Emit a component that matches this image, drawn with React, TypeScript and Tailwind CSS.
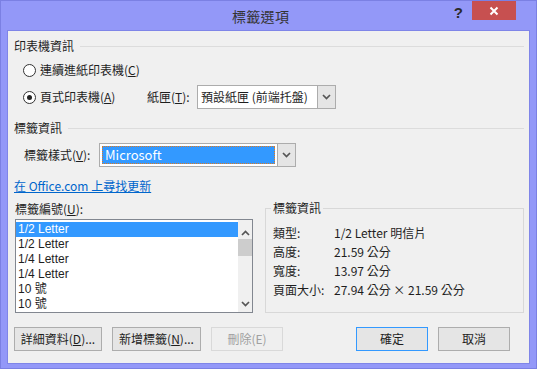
import React from "react";

const Chevron = ({ up = false }: { up?: boolean }) => (
  <svg width="9" height="6" viewBox="0 0 9 6" className={up ? "rotate-180" : ""}>
    <polyline points="1,1 4.5,4.5 8,1" fill="none" stroke="#555" strokeWidth="1.7" />
  </svg>
);

const Radio = ({ checked }: { checked?: boolean }) => (
  <span className="w-[13px] h-[13px] rounded-full border border-[#333] bg-white flex items-center justify-center shrink-0">
    {checked && <span className="w-[5px] h-[5px] rounded-full bg-[#222]" />}
  </span>
);

const SectionHeader = ({ title, className }: { title: string; className: string }) => (
  <div className={"flex items-center h-[16px] leading-[16px] " + className}>
    <span>{title}</span>
    <span className="flex-1 h-px bg-[#dcdcdc] ml-[6px]" />
  </div>
);

const DropButton = () => (
  <div className="w-[18px] h-full bg-[#e5e5e5] border-l border-[#acacac] flex items-center justify-center">
    <Chevron />
  </div>
);

const labels = ["1/2 Letter", "1/2 Letter", "1/4 Letter", "1/4 Letter", "10 號", "10 號"];

const info: [string, string][] = [
  ["類型:", "1/2 Letter 明信片"],
  ["高度:", "21.59 公分"],
  ["寬度:", "13.97 公分"],
  ["頁面大小:", "27.94 公分 × 21.59 公分"],
];

function Btn({ children, w, variant }: { children: React.ReactNode; w: string; variant?: "default" | "disabled" }) {
  const base = "h-[24px] flex items-center justify-center border " + w + " ";
  const look =
    variant === "default"
      ? "border-[#3399ff] bg-[#e5e5e5]"
      : variant === "disabled"
      ? "border-[#d9d9d9] bg-[#efefef] text-[#a0a0a0]"
      : "border-[#adadad] bg-[#e5e5e5]";
  return <div className={base + look}>{children}</div>;
}

export default function App() {
  return (
    <div className="w-[537px] h-[369px] bg-[#9398f8] border border-[#7b80e3] flex flex-col text-[12px] text-[#1e1e1e] font-['Noto_Sans_CJK_TC',sans-serif] select-none">
      {/* title bar */}
      <div className="h-[29px] flex shrink-0">
        <span className="ml-[231px] mt-[6px] text-[14px] tracking-[0.3px] text-[#333] leading-[18px]">標籤選項</span>
        <span className="flex-1" />
        <span className="mt-[3px] mr-[9px] text-[15px] font-bold text-[#2a2a2a] font-['Liberation_Sans',sans-serif] leading-[18px]">?</span>
        <div className="w-[44px] h-[19px] bg-[#c75050] flex items-center justify-center mr-[20px]">
          <svg width="10" height="10" viewBox="0 0 10 10">
            <path d="M1.5 1.5 L8.5 8.5 M8.5 1.5 L1.5 8.5" stroke="#fff" strokeWidth="2" />
          </svg>
        </div>
      </div>

      {/* client */}
      <div className="flex-1 mx-[6px] mb-[4px] border border-[#7f85e8] bg-[#f0f0f0] pl-[6px] pr-[5px] flex flex-col">
        <SectionHeader title="印表機資訊" className="mt-[7px]" />

        <div className="mt-[6px] h-[20px] flex items-center pl-[9px] gap-[4px]">
          <Radio />
          <span>
            連續進紙印表機(<u>C</u>)
          </span>
        </div>

        <div className="mt-[5px] h-[24px] flex items-center pl-[9px]">
          <Radio checked />
          <span className="ml-[4px] w-[107px]">
            頁式印表機(<u>A</u>)
          </span>
          <span className="w-[50px]">
            紙匣(<u>T</u>):
          </span>
          <div className="w-[139px] h-[24px] border border-[#acacac] bg-white flex">
            <span className="flex-1 pl-[3px] leading-[22px]">預設紙匣 (前端托盤)</span>
            <DropButton />
          </div>
        </div>

        <SectionHeader title="標籤資訊" className="mt-[11px]" />

        <div className="mt-[7px] h-[24px] flex items-center pl-[10px]">
          <span className="w-[75px]">
            標籤樣式(<u>V</u>):
          </span>
          <div className="w-[197px] h-[24px] border border-[#acacac] bg-white flex">
            <div className="flex-1 p-[2px]">
              <div className="h-full bg-[#3399ff] border border-dotted border-[#e07a1f] text-white pl-[2px] leading-[16px] text-[13px]">
                Microsoft
              </div>
            </div>
            <DropButton />
          </div>
        </div>

        <div className="mt-[11px] h-[16px] leading-[16px] text-[#0066cc] underline">在 Office.com 上尋找更新</div>

        <div className="mt-[7px] flex">
          <div className="ml-[1px] w-[238px] flex flex-col">
            <span className="h-[16px] leading-[16px]">
              標籤編號(<u>U</u>):
            </span>
            <div className="mt-[2px] h-[94px] border border-[#828790] bg-white flex">
              <div className="flex-1 flex flex-col pt-[2px] font-['Liberation_Sans','Noto_Sans_CJK_TC',sans-serif]">
                {labels.map((l, i) => (
                  <div
                    key={i}
                    className={
                      "h-[15px] leading-[15px] pl-[2px] overflow-hidden " + (i === 0 ? "bg-[#3399ff] text-white" : "")
                    }
                  >
                    {l}
                  </div>
                ))}
              </div>
              <div className="w-[14px] bg-[#f0f0f0] flex flex-col">
                <div className="h-[18px] flex items-end justify-center pb-[2px]">
                  <Chevron up />
                </div>
                <div className="mt-[1px] h-[17px] bg-[#cdcdcd]" />
                <div className="flex-1" />
                <div className="h-[17px] flex items-center justify-center">
                  <Chevron />
                </div>
              </div>
            </div>
          </div>

          <div className="ml-[12px] flex-1 mt-[7px] h-[105px] border border-[#d8d8d8] relative pt-[14px] pl-[7px]">
            <span className="absolute -top-[9px] left-[5px] px-[2px] bg-[#f0f0f0] leading-[16px]">標籤資訊</span>
            {info.map(([k, v]) => (
              <div key={k} className="flex h-[19px] leading-[19px]">
                <span className="w-[61px]">{k}</span>
                <span>{v}</span>
              </div>
            ))}
          </div>
        </div>

        <div className="mt-[14px] flex pr-[14px]">
          <Btn w="w-[88px]">
            詳細資料(<u>D</u>)...
          </Btn>
          <span className="w-[10px]" />
          <Btn w="w-[89px]">
            新增標籤(<u>N</u>)...
          </Btn>
          <span className="w-[10px]" />
          <Btn w="w-[72px]" variant="disabled">
            刪除(E)
          </Btn>
          <span className="flex-1" />
          <Btn w="w-[72px]" variant="default">
            確定
          </Btn>
          <span className="w-[10px]" />
          <Btn w="w-[72px]">取消</Btn>
        </div>
      </div>
    </div>
  );
}
